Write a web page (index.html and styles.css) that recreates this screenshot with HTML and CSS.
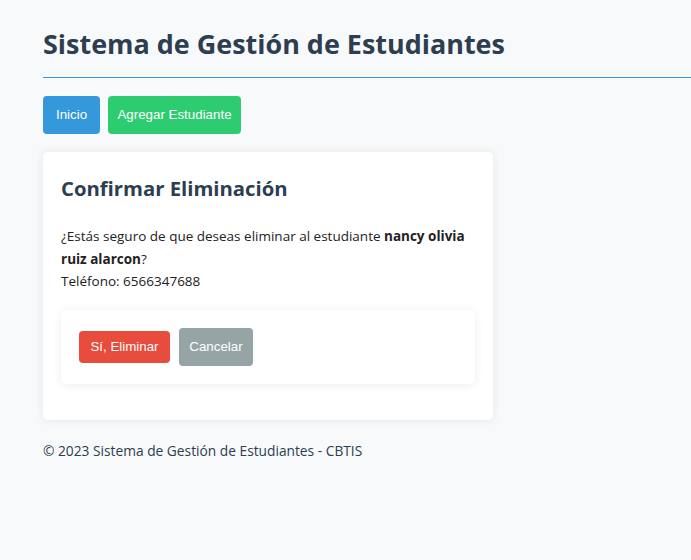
FILE: index.html
```html
<!DOCTYPE html>
<html lang="es">
<head>
<meta charset="utf-8">
<title>Sistema de Gestión de Estudiantes</title>
<link rel="stylesheet" href="styles.css">
</head>
<body>
<div class="container">
  <header class="header">
    <h1 class="title">Sistema de Gestión de Estudiantes</h1>
  </header>
  <nav class="nav">
    <a class="btn btn-blue btn-inicio" href="#">Inicio</a>
    <a class="btn btn-green btn-add" href="#">Agregar Estudiante</a>
  </nav>
  <section class="card">
    <h2 class="card-title">Confirmar Eliminación</h2>
    <p class="message">¿Estás seguro de que deseas eliminar al estudiante <strong>nancy olivia ruiz alarcon</strong>?<br>Teléfono: 6566347688</p>
    <div class="actions">
      <button class="btn btn-red btn-delete" type="button">Sí, Eliminar</button>
      <a class="btn btn-gray btn-cancel" href="#">Cancelar</a>
    </div>
  </section>
  <footer class="footer">© 2023 Sistema de Gestión de Estudiantes - CBTIS</footer>
</div>
</body>
</html>
```
FILE: styles.css
```css
html, body {
  margin: 0;
  padding: 0;
  background: #f8f9fa;
}
body {
  font-family: "Open Sans", "Noto Sans", sans-serif;
  color: #2c3e50;
  font-size: 14px;
}
.container {
  padding: 20px 0 40px 43px;
}
.header {
  border-bottom: 1px solid #3498db;
  padding-bottom: 10px;
  margin-bottom: 18px;
}
.title {
  margin: 0;
  font-size: 26.95px;
  line-height: 47px;
  font-weight: 700;
  color: #2c3e50;
}
.nav {
  display: flex;
  gap: 8px;
  margin-bottom: 18px;
}
.btn {
  display: inline-block;
  font-family: "Liberation Sans", Arial, sans-serif;
  font-size: 13.33px;
  line-height: 18px;
  color: #fff;
  text-decoration: none;
  border: none;
  border-radius: 4px;
  padding: 10px 13px;
  box-sizing: border-box;
}
.btn-blue { background: #3498db; width: 57px; height: 38px; text-align: center; padding-left: 0; padding-right: 0; }
.btn-green { background: #2ecc71; width: 133px; height: 38px; text-align: center; padding-left: 0; padding-right: 0; }
.btn-red { background: #e74c3c; }
.btn-gray { background: #95a5a6; }
.card {
  width: 450px;
  box-sizing: border-box;
  background: #fff;
  border-radius: 5px;
  box-shadow: 0 0 10px rgba(0, 0, 0, 0.08);
  padding: 18px;
}
.card-title {
  margin: 0 0 19px;
  font-size: 20.3px;
  line-height: 36px;
  font-weight: 700;
  color: #2c3e50;
}
.message {
  margin: 0 0 17px;
  font-size: 13.5px;
  line-height: 22.5px;
  color: #222;
}
.message strong { font-weight: 700; }
.actions {
  display: flex;
  align-items: center;
  gap: 9px;
  padding: 18px;
  margin-bottom: 18px;
  border-radius: 5px;
  background: #fff;
  box-shadow: 0 1px 8px rgba(0, 0, 0, 0.08);
}
.btn-delete {
  width: 91px;
  height: 32px;
  padding: 0;
  text-align: center;
  cursor: pointer;
}
.btn-cancel {
  width: 74px;
  height: 38px;
  padding: 0;
  line-height: 38px;
  text-align: center;
}
.footer {
  margin-top: 21px;
  font-size: 13.75px;
  color: #2c3e50;
}
```
